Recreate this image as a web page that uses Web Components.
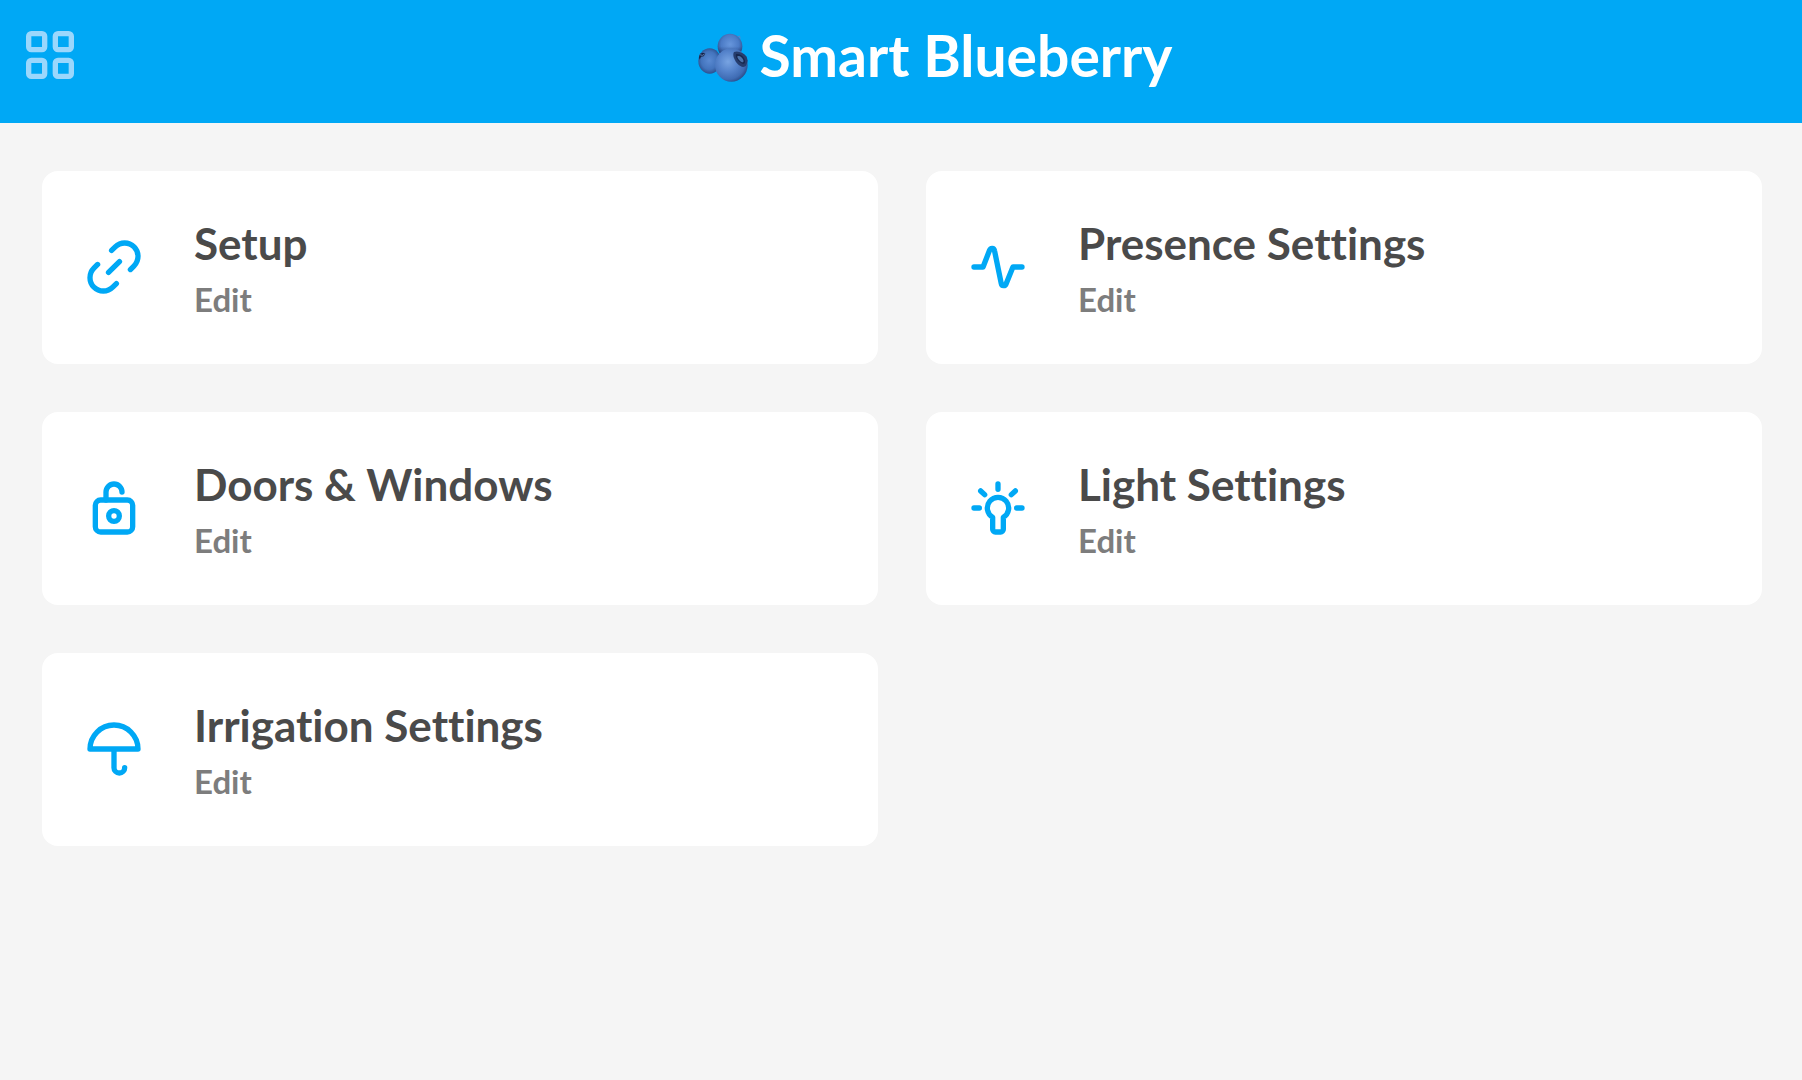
<!DOCTYPE html>
<html lang="en">
<head>
<meta charset="utf-8">
<meta name="viewport" content="width=device-width, initial-scale=1">
<title>Smart Blueberry</title>
<style>
  :root { --accent: #00a8f5; --page: #f5f5f5; --ink: #4a4a4a; --muted: #7d7d7d; }
  body { margin: 0; background: var(--page); font-family: Lato, "Open Sans", sans-serif; font-weight: 700; font-variant-ligatures: none; }
</style>
</head>
<body>
<template id="header-template">
  <style>
    :host { display: block; background: var(--accent); color: #fff; }
    header { display: flex; align-items: center; padding: 23px 14px 36px 18px; }
    button { display: block; flex: none; padding: 0; border: 0; background: none; color: #9bd7fc; cursor: pointer; }
    button svg { display: block; width: 64px; height: 64px; }
    h1 { flex: 1; display: flex; align-items: center; justify-content: center; gap: 12px; margin: 0; font-size: 57px; line-height: 64px; font-weight: 700; }
  </style>
  <header>
    <button type="button" aria-label="Menu">
      <svg viewBox="0 0 24 24" fill="none" stroke="currentColor" stroke-width="2" aria-hidden="true">
        <rect x="4" y="4" width="6" height="6" rx="1"/><rect x="14" y="4" width="6" height="6" rx="1"/>
        <rect x="4" y="14" width="6" height="6" rx="1"/><rect x="14" y="14" width="6" height="6" rx="1"/>
      </svg>
    </button>
    <h1><blueberry-logo></blueberry-logo><span><slot></slot></span></h1>
  </header>
</template>

<template id="logo-template">
  <style>
    :host { display: block; flex: none; padding-top: 4px; }
    svg { display: block; width: 50px; height: 50px; }
  </style>
  <svg viewBox="24 37 150 150" aria-hidden="true">
    <defs>
      <radialGradient id="back" cx=".5" cy=".42" r=".6">
        <stop offset="0" stop-color="#6796dc"/><stop offset=".6" stop-color="#4b7bc6"/><stop offset="1" stop-color="#2a4a86"/>
      </radialGradient>
      <radialGradient id="left" cx=".48" cy=".48" r=".58">
        <stop offset="0" stop-color="#5a8ad2"/><stop offset=".6" stop-color="#4374bd"/><stop offset="1" stop-color="#26447e"/>
      </radialGradient>
      <radialGradient id="front" cx=".4" cy=".4" r=".66">
        <stop offset="0" stop-color="#78a4e2"/><stop offset=".45" stop-color="#5684cc"/><stop offset=".8" stop-color="#3f6cb4"/><stop offset="1" stop-color="#284782"/>
      </radialGradient>
      <linearGradient id="shade" x1="0" y1="0" x2="0" y2="1">
        <stop offset=".5" stop-color="#1a2b60" stop-opacity="0"/><stop offset="1" stop-color="#172654" stop-opacity=".8"/>
      </linearGradient>
    </defs>
    <ellipse cx="59" cy="124" rx="34" ry="38" fill="url(#left)"/>
    <path d="M27 113l3-11 9-3 7 3-5 8-8 1-4 9z" fill="#162243"/>
    <path d="M29 105l8 2 6-3" fill="none" stroke="#5b82be" stroke-width="3"/>
    <ellipse cx="120" cy="80" rx="37" ry="38" fill="url(#back)"/>
    <ellipse cx="120" cy="80" rx="37" ry="38" fill="url(#shade)"/>
    <path d="M142 49l8-1 2 9z" fill="#5a83c9"/>
    <ellipse cx="124" cy="136" rx="49" ry="50" fill="url(#front)"/>
    <path d="M132 97c11-5 29 2 38 14l3 12-4 14c-7 8-17 5-26-4-9-10-17-26-11-36z" fill="#263d6d"/>
    <path d="M138 104c8-3 20 4 25 13 4 9 2 17-5 15-9-2-24-18-20-28z" fill="#17284e"/>
    <path d="M142 110c6-4 15 3 18 11 2 7-2 9-7 5-6-4-12-11-11-16z" fill="#4d73aa"/>
  </svg>
</template>

<template id="card-template">
  <style>
    :host { display: block; }
    a { display: flex; align-items: center; gap: 48px; padding: 46px 40px 47px; border-radius: 16px; background: #fff; color: var(--muted); text-decoration: none; }
    svg { display: block; flex: none; width: 64px; height: 64px; color: var(--accent); }
    div { display: flex; flex-direction: column; gap: 11px; min-width: 0; }
    h2 { margin: 0; color: var(--ink); font-size: 44px; line-height: 53px; font-weight: 700; }
    span { font-size: 33px; line-height: 36px; }
  </style>
  <a href="#">
    <svg viewBox="0 0 24 24" fill="none" stroke="currentColor" stroke-width="2" stroke-linecap="round" stroke-linejoin="round" aria-hidden="true"></svg>
    <div><h2><slot></slot></h2><span><slot name="action">Edit</slot></span></div>
  </a>
</template>

<template id="dashboard-template">
  <style>
    :host { display: block; }
    main { display: grid; grid-template-columns: repeat(2, minmax(0, 1fr)); gap: 48px; padding: 48px 40px 48px 42px; }
    @media (max-width: 1000px) { main { grid-template-columns: minmax(0, 1fr); } }
  </style>
  <main><slot></slot></main>
</template>

<app-header>Smart Blueberry</app-header>
<settings-dashboard>
  <settings-card icon="link">Setup</settings-card>
  <settings-card icon="activity">Presence Settings</settings-card>
  <settings-card icon="lock">Doors &amp; Windows</settings-card>
  <settings-card icon="bulb">Light Settings</settings-card>
  <settings-card icon="umbrella">Irrigation Settings</settings-card>
</settings-dashboard>

<script>
  const icons = {
    link: '<path d="M11.1 5.8L12.46 4.46A5 5 0 0 1 19.54 11.54L18.15 12.95M12.9 18.2L11.54 19.54A5 5 0 0 1 4.46 12.46L5.85 11.05M9.95 14.05L14.05 9.95"/>',
    activity: '<path d="M3 12H6.4L8.8 5.8C9.2 4.7 10.5 4.7 10.7 5.9L13.2 18.1C13.4 19.3 14.7 19.3 15.1 18.2L17.6 12H21"/>',
    lock: '<rect x="5" y="9" width="14" height="12" rx="2"/><circle cx="12" cy="15" r="2"/><path d="M9 9V6a3 3 0 0 1 6 0"/>',
    bulb: '<path d="M10 15.46a4 4 0 1 1 4 0V20a1 1 0 0 1-1 1h-2a1 1 0 0 1-1-1zM12 3v2M3 12h2M19 12h2M5.5 5.6L7 7M18.5 5.6L17 7"/>',
    umbrella: '<path d="M3 12a9 9 0 0 1 18 0zM12 12v7a2 2 0 0 0 4 0"/>'
  };

  class TemplateElement extends HTMLElement {
    constructor() {
      super();
      const template = document.getElementById(this.constructor.template);
      this.attachShadow({ mode: 'open' }).append(template.content.cloneNode(true));
    }
  }

  class BlueberryLogo extends TemplateElement { static template = 'logo-template'; }
  class AppHeader extends TemplateElement { static template = 'header-template'; }
  class SettingsDashboard extends TemplateElement { static template = 'dashboard-template'; }
  class SettingsCard extends TemplateElement {
    static template = 'card-template';
    connectedCallback() {
      this.shadowRoot.querySelector('svg').innerHTML = icons[this.getAttribute('icon')] || '';
    }
  }

  customElements.define('blueberry-logo', BlueberryLogo);
  customElements.define('app-header', AppHeader);
  customElements.define('settings-dashboard', SettingsDashboard);
  customElements.define('settings-card', SettingsCard);
</script>
</body>
</html>
